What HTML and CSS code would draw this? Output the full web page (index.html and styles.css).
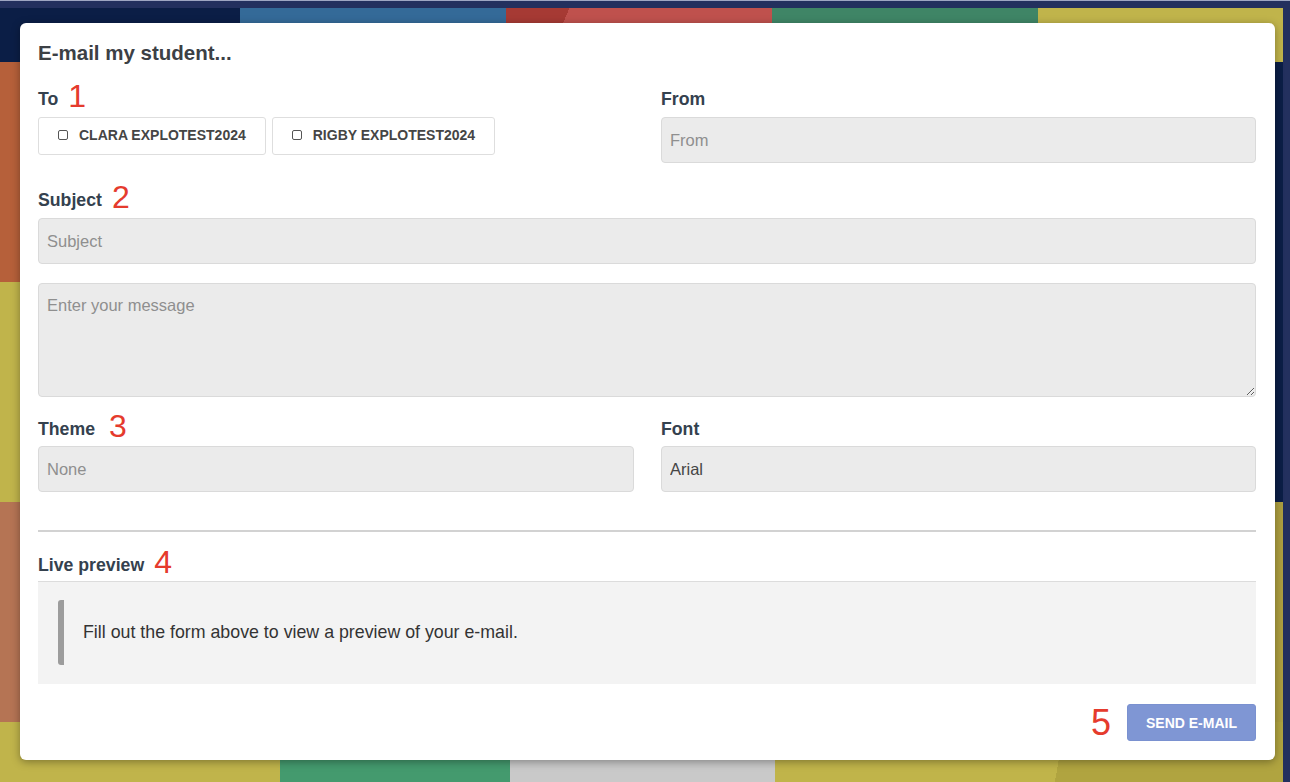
FILE: index.html
```html
<!DOCTYPE html>
<html lang="en">
<head>
    <meta charset="UTF-8">
    <meta name="viewport" content="width=device-width, initial-scale=1.0">
    <title>E-mail my student</title>
    <link rel="stylesheet" href="styles.css">
</head>
<body>
    <div class="mosaic">
        <div class="band band-top">
            <div class="tile navy w240"></div>
            <div class="tile blue w266"></div>
            <div class="tile red w266"></div>
            <div class="tile green w266"></div>
            <div class="tile yellow grow"></div>
        </div>
        <div class="band band-mid">
            <div class="tile orange w240"></div>
            <div class="tile green grow"></div>
            <div class="tile navy w245"></div>
        </div>
        <div class="band band-mid">
            <div class="tile yellow w240"></div>
            <div class="tile blue grow"></div>
            <div class="tile navy w245"></div>
        </div>
        <div class="band band-mid">
            <div class="tile salmon w240"></div>
            <div class="tile red grow"></div>
            <div class="tile olive w245"></div>
        </div>
        <div class="band band-bottom">
            <div class="tile yellow w280"></div>
            <div class="tile green-light w230"></div>
            <div class="tile gray w265"></div>
            <div class="tile yellow-diag grow"></div>
        </div>
    </div>

    <div class="modal">
        <h2 class="modal-title">E-mail my student...</h2>

        <div class="form-row two-col">
            <div class="field">
                <div class="label-row"><label>To</label><span class="step">1</span></div>
                <div class="recipients">
                    <label class="recipient"><span class="box"></span>Clara Explotest2024</label>
                    <label class="recipient"><span class="box"></span>Rigby Explotest2024</label>
                </div>
            </div>
            <div class="field">
                <div class="label-row"><label for="from">From</label></div>
                <input type="text" id="from" class="input" placeholder="From" disabled>
            </div>
        </div>

        <div class="form-row">
            <div class="label-row"><label for="subject">Subject</label><span class="step">2</span></div>
            <input type="text" id="subject" class="input" placeholder="Subject">
        </div>

        <div class="form-row message-row">
            <textarea id="message" class="input textarea" placeholder="Enter your message"></textarea>
        </div>

        <div class="form-row two-col theme-row">
            <div class="field">
                <div class="label-row"><label for="theme">Theme</label><span class="step step-wide">3</span></div>
                <input type="text" id="theme" class="input" placeholder="None">
            </div>
            <div class="field">
                <div class="label-row"><label for="font">Font</label></div>
                <input type="text" id="font" class="input filled" value="Arial">
            </div>
        </div>

        <hr class="divider">

        <div class="label-row preview-label"><label>Live preview</label><span class="step">4</span></div>
        <div class="preview">
            <div class="preview-quote">Fill out the form above to view a preview of your e-mail.</div>
        </div>

        <div class="modal-footer">
            <span class="step step-big">5</span>
            <button class="send-btn" disabled>Send E-mail</button>
        </div>
    </div>
</body>
</html>
```

FILE: styles.css
```css
* { box-sizing: border-box; }
html, body { margin: 0; height: 100%; }
body { font-family: "Liberation Sans", Arial, Helvetica, sans-serif; overflow: hidden; position: relative; }

/* background tiles */
.mosaic { position: absolute; inset: 0; display: flex; flex-direction: column; background: #23305e; border-top: 1px solid #9ea6c2; padding: 7px 7px 0 0; }
.band { display: flex; }
.band-top { height: 54px; }
.band-mid { height: 220px; }
.band-bottom { flex: 1; }
.tile { height: 100%; }
.w240 { width: 240px; }
.w245 { width: 245px; }
.w265 { width: 265px; }
.w266 { width: 266px; }
.w230 { width: 230px; }
.w280 { width: 280px; }
.grow { flex: 1; }
.navy { background: #0b1e46; }
.blue { background: #346a98; }
.red { background: linear-gradient(112deg, #a63a34 22%, #bf514d 22%); }
.green { background: #3f8566; }
.green-light { background: #449a6e; }
.yellow { background: #c0b44b; }
.yellow-diag { background: linear-gradient(100deg, #c0b44a 0 56%, #b0a440 56% 100%); }
.orange { background: #b6603a; }
.salmon { background: #b57454; }
.olive { background: #ad9f40; }
.gray { background: #c9c9c9; }

/* dialog */
.modal { position: absolute; top: 23px; left: 20px; width: 1255px; height: 737px; background: #fff; border-radius: 6px; box-shadow: 0 2px 8px rgba(0,0,0,0.35); padding: 18px 19px 19px 18px; display: flex; flex-direction: column; }
.modal-title { margin: 0 0 15px; font-size: 20.5px; line-height: 24px; font-weight: bold; color: #3c4045; }

.form-row { margin-top: 18px; }
.form-row:first-of-type { margin-top: 0; }
.two-col { display: grid; grid-template-columns: 596px 1fr; column-gap: 27px; }
.message-row { margin-top: 19px; }
.theme-row { margin-top: 13px; }
.theme-row .label-row { margin-bottom: 4px; }

.label-row { height: 32px; font-size: 32px; line-height: 32px; margin-bottom: 5px; white-space: nowrap; }
.label-row label { font-size: 17.7px; font-weight: bold; color: #34414e; vertical-align: 2px; }
.step { font-size: 32px; color: #e53b2d; margin-left: 10px; }
.step-wide { margin-left: 14px; }
.step-big { font-size: 36px; line-height: 36px; margin: 0; }

.recipients { display: flex; gap: 6px; }
.recipient { display: flex; align-items: center; gap: 11px; height: 38px; padding: 0 19px 2px 19px; border: 1px solid #dedede; border-radius: 3px; font-size: 14px; font-weight: bold; text-transform: uppercase; color: #454545; }
.box { width: 10px; height: 10px; border: 1px solid #555; border-radius: 2px; background: #fff; }

.input { display: block; width: 100%; height: 46px; padding: 0 8px; background: #ebebeb; border: 1px solid #dadada; border-radius: 4px; font-family: inherit; font-size: 16.5px; color: #454545; }
.input::placeholder { color: #8f8f8f; }
.input:disabled { background: #ebebeb; }
.textarea { height: 114px; padding: 12px 8px; resize: vertical; }

.divider { margin: 38px 0 0; border: none; height: 2px; background: #d2d2d2; }
.preview-label { margin-top: 14px; margin-bottom: 3px; }
.preview { background: #f3f3f3; border-top: 1px solid #dcdcdc; padding: 18px 20px 19px; }
.preview-quote { height: 65px; display: flex; align-items: center; border-left: 6px solid #9c9c9c; border-radius: 3px; padding-left: 19px; font-size: 17.8px; color: #333; }

.modal-footer { margin-top: auto; display: flex; justify-content: flex-end; align-items: center; gap: 16px; }
.send-btn { height: 37px; padding: 0 18px; background: #7f96d4; border: 1px solid #7a91d0; border-radius: 3px; color: #fff; font-family: inherit; font-size: 14px; font-weight: bold; text-transform: uppercase; }
```
